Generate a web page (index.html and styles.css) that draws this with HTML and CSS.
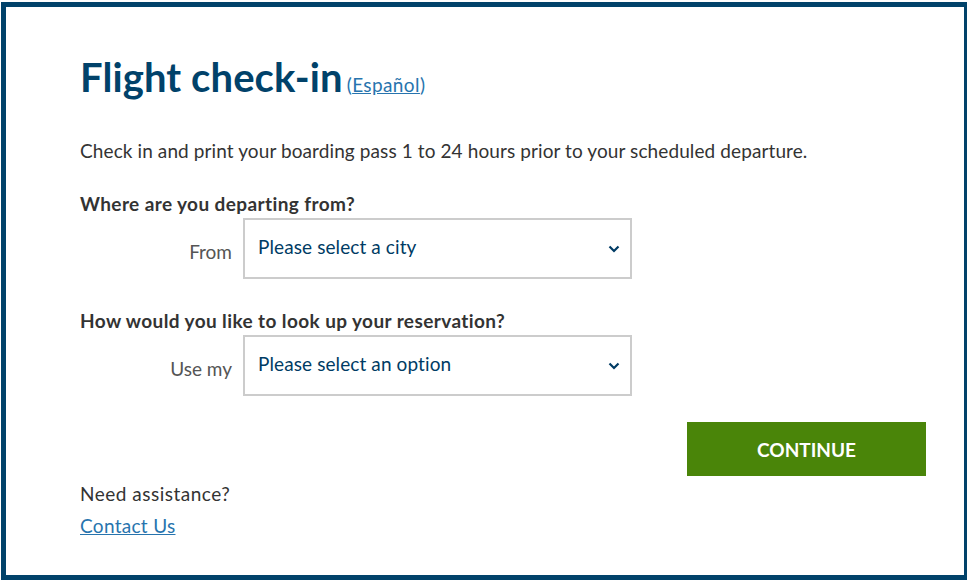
FILE: index.html
```html
<!DOCTYPE html>
<html lang="en">

<head>
    <meta charset="UTF-8">
    <meta name="viewport" content="width=device-width, initial-scale=1.0">
    <title>Flight check-in</title>
    <link rel="stylesheet" href="styles.css">
</head>

<body>
    <div class="frame">
        <div class="checkin">
            <h1 class="title">Flight check-in<span class="lang">(<a href="#">Español</a>)</span></h1>

            <p class="intro">Check in and print your boarding pass 1 to 24 hours prior to your scheduled departure.</p>

            <form class="checkin-form">
                <div class="field-group">
                    <h2 class="question">Where are you departing from?</h2>
                    <div class="field-row">
                        <label class="field-label" for="from-city">From</label>
                        <div class="select-box" id="from-city">
                            <span>Please select a city</span>
                            <svg class="chevron" width="12" height="8" viewBox="0 0 12 8">
                                <path d="M1.5 1.5 L6 6 L10.5 1.5" fill="none" stroke="#003b64" stroke-width="2.2" />
                            </svg>
                        </div>
                    </div>
                </div>

                <div class="field-group">
                    <h2 class="question">How would you like to look up your reservation?</h2>
                    <div class="field-row">
                        <label class="field-label" for="lookup">Use my</label>
                        <div class="select-box" id="lookup">
                            <span>Please select an option</span>
                            <svg class="chevron" width="12" height="8" viewBox="0 0 12 8">
                                <path d="M1.5 1.5 L6 6 L10.5 1.5" fill="none" stroke="#003b64" stroke-width="2.2" />
                            </svg>
                        </div>
                    </div>
                </div>

                <div class="actions">
                    <button type="button" class="continue-btn">CONTINUE</button>
                </div>
            </form>

            <div class="assistance">
                <p>Need assistance?</p>
                <a href="#">Contact Us</a>
            </div>
        </div>
    </div>
</body>

</html>
```

FILE: styles.css
```css
html,
body {
    overflow: hidden;
}

body {
    margin: 0;
    font-family: Lato, "Noto Sans", sans-serif;
    color: #333;
    background: #fff;
}

.frame {
    box-sizing: border-box;
    width: 968px;
    height: 578px;
    margin: 2px 0 0 1px;
    border: 5px solid #01426a;
    padding: 48px 38px 0 74px;
}

.title {
    margin: 0;
    font-size: 40px;
    font-weight: 700;
    letter-spacing: 0.1px;
    color: #01426a;
    line-height: 44px;
}

.lang {
    font-size: 19px;
    font-weight: 400;
    letter-spacing: 0.4px;
    color: #2774ae;
    margin-left: 4px;
}

.lang a {
    color: #2774ae;
}

.intro {
    margin: 32px 0 0;
    font-size: 19px;
    letter-spacing: 0.1px;
    line-height: 24px;
}

.question {
    margin: 0;
    font-size: 19px;
    font-weight: 700;
    letter-spacing: 0.4px;
    line-height: 22px;
}

.field-group {
    margin-top: 30px;
}

.field-group+.field-group {
    margin-top: 31px;
}

.field-row {
    display: flex;
    align-items: center;
    margin-top: 3px;
}

.field-label {
    width: 152px;
    text-align: right;
    margin-right: 11px;
    font-size: 19px;
    color: #555;
    padding-top: 5px;
}

.select-box {
    box-sizing: border-box;
    width: 389px;
    height: 61px;
    border: 2px solid #ccc;
    display: flex;
    align-items: center;
    justify-content: space-between;
    padding: 0 10px 0 13px;
    font-size: 19px;
    letter-spacing: 0.1px;
    color: #003b64;
}

.select-box span {
    margin-top: -5px;
}

.actions {
    display: flex;
    justify-content: flex-end;
    margin-top: 26px;
}

.continue-btn {
    width: 239px;
    height: 54px;
    border: 0;
    background: #4a8509;
    color: #fff;
    font-family: inherit;
    font-size: 19px;
    font-weight: 700;
    cursor: pointer;
}

.assistance {
    margin-top: 6px;
    font-size: 19px;
    letter-spacing: 0.5px;
}

.assistance p {
    margin: 0;
    line-height: 24px;
}

.assistance a {
    display: inline-block;
    margin-top: 8px;
    letter-spacing: 0.3px;
    color: #2774ae;
}
```
